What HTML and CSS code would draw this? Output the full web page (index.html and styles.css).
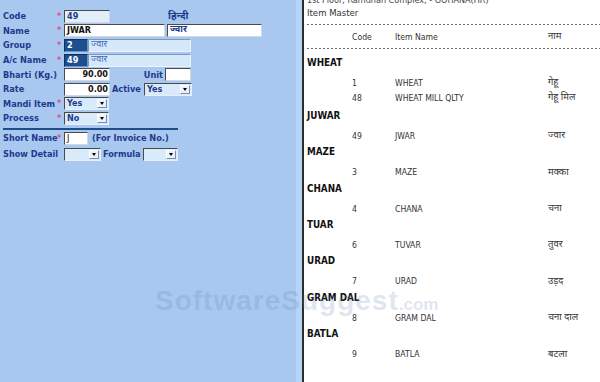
FILE: index.html
```html
<!DOCTYPE html>
<html>
<head>
<meta charset="utf-8">
<title>Item Master</title>
<link rel="stylesheet" href="styles.css">
</head>
<body>
<div class="screen">
  <div class="left">
    <div class="form">
      <div class="row">
        <span class="lbl">Code</span><span class="star">*</span>
        <span class="box light w46 navy">49</span>
        <span class="hindi-head">हिन्दी</span>
      </div>
      <div class="row">
        <span class="lbl">Name</span><span class="star">*</span>
        <span class="box white w101">JWAR</span>
        <span class="box white w95 hi navyhi gap2">ज्वार</span>
      </div>
      <div class="row">
        <span class="lbl">Group</span><span class="star">*</span>
        <span class="box dark w24">2</span>
        <span class="box pale w103 hi">ज्वार</span>
      </div>
      <div class="row">
        <span class="lbl">A/c Name</span><span class="star">*</span>
        <span class="box dark w24">49</span>
        <span class="box pale w103 hi">ज्वार</span>
      </div>
      <div class="row">
        <span class="lbl">Bharti (Kg.)</span><span class="nostar"></span>
        <span class="box white w46 num">90.00</span>
        <span class="lbl2 unit">Unit</span>
        <span class="box white w26 gap1"></span>
      </div>
      <div class="row">
        <span class="lbl">Rate</span><span class="nostar"></span>
        <span class="box white w46 num">0.00</span>
        <span class="lbl2 active">Active</span>
        <span class="sel w48 gap2"><span class="val">Yes</span><span class="arr"></span></span>
      </div>
      <div class="row">
        <span class="lbl">Mandi Item</span><span class="star">*</span>
        <span class="sel w45"><span class="val">Yes</span><span class="arr"></span></span>
      </div>
      <div class="row">
        <span class="lbl">Process</span><span class="star">*</span>
        <span class="sel w45"><span class="val">No</span><span class="arr"></span></span>
      </div>
      <div class="rule"></div>
      <div class="row">
        <span class="lbl">Short Name</span><span class="star">*</span>
        <span class="box white w24 thin">J</span>
        <span class="lbl2 note">(For Invoice No.)</span>
      </div>
      <div class="row row-last">
        <span class="lbl">Show Detail</span><span class="nostar"></span>
        <span class="sel w37"><span class="val"></span><span class="arr"></span></span>
        <span class="lbl2 formula">Formula</span>
        <span class="sel w35 gap2"><span class="val"></span><span class="arr"></span></span>
      </div>
    </div>
  </div>
  <div class="strip"></div>
  <div class="divider"></div>
  <div class="right">
    <div class="addr">1st Floor, Ramdhan Complex, - GOHANA(HR)</div>
    <div class="title">Item Master</div>
    <div class="dash"></div>
    <div class="line head">
      <span></span><span>Code</span><span>Item Name</span><span class="hi">नाम</span>
    </div>
    <div class="dash"></div>
    <div class="list">
      <div class="group multi">
        <div class="ghead">WHEAT</div>
        <div class="rows">
          <div class="line"><span></span><span>1</span><span>WHEAT</span><span class="hi">गेहू</span></div>
          <div class="line"><span></span><span>48</span><span>WHEAT MILL QLTY</span><span class="hi">गेहू मिल</span></div>
        </div>
      </div>
      <div class="group">
        <div class="ghead">JUWAR</div>
        <div class="rows">
          <div class="line"><span></span><span>49</span><span>JWAR</span><span class="hi">ज्वार</span></div>
        </div>
      </div>
      <div class="group">
        <div class="ghead">MAZE</div>
        <div class="rows">
          <div class="line"><span></span><span>3</span><span>MAZE</span><span class="hi">मक्का</span></div>
        </div>
      </div>
      <div class="group">
        <div class="ghead">CHANA</div>
        <div class="rows">
          <div class="line"><span></span><span>4</span><span>CHANA</span><span class="hi">चना</span></div>
        </div>
      </div>
      <div class="group">
        <div class="ghead">TUAR</div>
        <div class="rows">
          <div class="line"><span></span><span>6</span><span>TUVAR</span><span class="hi">तुवर</span></div>
        </div>
      </div>
      <div class="group">
        <div class="ghead">URAD</div>
        <div class="rows">
          <div class="line"><span></span><span>7</span><span>URAD</span><span class="hi">उड़द</span></div>
        </div>
      </div>
      <div class="group">
        <div class="ghead">GRAM DAL</div>
        <div class="rows">
          <div class="line"><span></span><span>8</span><span>GRAM DAL</span><span class="hi">चना दाल</span></div>
        </div>
      </div>
      <div class="group">
        <div class="ghead">BATLA</div>
        <div class="rows">
          <div class="line"><span></span><span>9</span><span>BATLA</span><span class="hi">बटला</span></div>
        </div>
      </div>
    </div>
  </div>
  <div class="watermark">SoftwareSuggest<span class="com">.com</span></div>
</div>
</body>
</html>
```

FILE: styles.css
```css
html, body {
  margin: 0;
  padding: 0;
  background: #ffffff;
}

.screen {
  position: relative;
  display: flex;
  width: 600px;
  height: 382px;
  overflow: hidden;
  font-family: "DejaVu Sans Condensed", "DejaVu Sans", "Noto Sans Devanagari", "Lohit Devanagari", sans-serif;
  font-stretch: condensed;
}

.left {
  flex: none;
  width: 296px;
  background: #a8c8f0;
}

.strip {
  flex: none;
  width: 6px;
  background: #b7d3f6;
}

.divider {
  flex: none;
  width: 2px;
  background: #2c2c2c;
}

.right {
  flex: 1;
  background: #ffffff;
  padding-left: 3px;
  overflow: hidden;
  color: #333333;
}

/* ---------- left form ---------- */

.form {
  padding: 9px 0 0 3px;
}

.row {
  display: flex;
  align-items: center;
  height: 14.6px;
}

.row-last {
  margin-top: 1.5px;
}

.lbl {
  flex: none;
  width: 54px;
  font-size: 9.1px;
  font-weight: bold;
  color: #1d3a8c;
  white-space: nowrap;
}

.lbl2 {
  flex: none;
  font-size: 9.1px;
  font-weight: bold;
  color: #1d3a8c;
  white-space: nowrap;
}

.unit {
  width: 54px;
  text-align: right;
  padding-right: 1px;
  box-sizing: border-box;
}

.active {
  margin-left: 2px;
  width: 30px;
}

.note {
  margin-left: 4px;
}

.formula {
  margin-left: 2px;
  width: 38px;
}

.star,
.nostar {
  flex: none;
  width: 7px;
  font-size: 9px;
  font-weight: bold;
  color: #e2507c;
  line-height: 1;
  text-align: left;
}

.box {
  flex: none;
  box-sizing: border-box;
  height: 13px;
  line-height: 11px;
  padding: 0 2px;
  font-size: 9px;
  font-weight: bold;
  color: #111111;
  border: 1px solid;
  border-color: #4a4a4a #cfd9e6 #cfd9e6 #4a4a4a;
  white-space: nowrap;
  overflow: hidden;
}

.light { background: #e2effb; }
.white { background: #ffffff; }
.pale {
  background: #d6e9fa;
  border-color: #7f98b8 #eaf3fd #eaf3fd #7f98b8;
  color: #3a68b4;
  font-weight: normal;
}
.dark {
  background: #1d4e8e;
  color: #ffffff;
  border-color: #0f2f60 #6f94c4 #6f94c4 #0f2f60;
}
.navy { color: #1d3a8c; }
.navyhi { color: #1d3a8c; }
.num { text-align: right; padding-right: 1px; }
.thin { font-weight: normal; }

.hi {
  font-family: "Noto Sans Devanagari", "Lohit Devanagari", "FreeSans", "DejaVu Sans", sans-serif;
}

.hindi-head {
  margin-left: 58px;
  font-family: "Noto Sans Devanagari", "Lohit Devanagari", "FreeSans", "DejaVu Sans", sans-serif;
  font-size: 10px;
  font-weight: bold;
  color: #1d3a8c;
}

.gap1 { margin-left: 1px; }
.gap2 { margin-left: 2px; }

.w24 { width: 24px; }
.w26 { width: 26px; }
.w35 { width: 35px; }
.w37 { width: 37px; }
.w45 { width: 45px; }
.w46 { width: 46px; }
.w48 { width: 48px; }
.w95 { width: 95px; }
.w101 { width: 101px; }
.w103 { width: 103px; }

.sel {
  flex: none;
  box-sizing: border-box;
  height: 13px;
  display: flex;
  align-items: center;
  background: #d9ebfb;
  border: 1px solid;
  border-color: #4a4a4a #e6f0fb #e6f0fb #4a4a4a;
  padding: 1px;
}

.sel .val {
  flex: 1;
  padding-left: 1px;
  font-size: 9px;
  font-weight: bold;
  color: #1d3a8c;
  line-height: 9px;
}

.sel .arr {
  flex: none;
  position: relative;
  width: 10px;
  height: 9px;
  box-sizing: border-box;
  background: #e9f2fb;
  border: 1px solid;
  border-color: #ffffff #7a8ea8 #7a8ea8 #ffffff;
}

.sel .arr::after {
  content: "";
  position: absolute;
  left: 2px;
  top: 2px;
  border-left: 2.5px solid transparent;
  border-right: 2.5px solid transparent;
  border-top: 3px solid #000000;
}

.rule {
  width: 175px;
  height: 2px;
  margin-top: 2.2px;
  margin-bottom: 1px;
  background: #1f4d8a;
}

/* ---------- right report ---------- */

.addr {
  height: 5px;
  line-height: 1px;
  overflow: hidden;
  font-size: 9px;
  white-space: nowrap;
  color: #444444;
}

.title {
  height: 13px;
  line-height: 13px;
  margin-top: 1px;
  font-size: 9.5px;
  color: #333333;
}

.dash {
  height: 1px;
  margin-top: 5px;
  background: repeating-linear-gradient(90deg, #6a6a6a 0 2px, transparent 2px 4px);
}

.head + .dash {
  margin-top: 0;
}

.line {
  display: grid;
  grid-template-columns: 45px 43px 153px 1fr;
  align-items: center;
  height: 15px;
  font-size: 8.6px;
  color: #333333;
  white-space: nowrap;
}

.line .hi {
  font-size: 9.5px;
}

.head {
  height: 23px;
}

.list {
  padding-top: 5px;
}

.ghead {
  height: 18.2px;
  line-height: 18.2px;
  font-size: 9.8px;
  font-weight: bold;
  color: #111111;
}

.rows {
  padding-top: 3.2px;
}

.multi .rows {
  padding-bottom: 1.6px;
}

/* ---------- watermark ---------- */

.watermark {
  position: absolute;
  left: 155px;
  top: 285px;
  font-family: "Liberation Sans", Arial, sans-serif;
  font-weight: bold;
  font-size: 28px;
  letter-spacing: 1px;
  color: rgba(90, 125, 170, 0.2);
  white-space: nowrap;
  pointer-events: none;
}

.watermark .com {
  font-size: 17px;
  letter-spacing: 0;
}
```
